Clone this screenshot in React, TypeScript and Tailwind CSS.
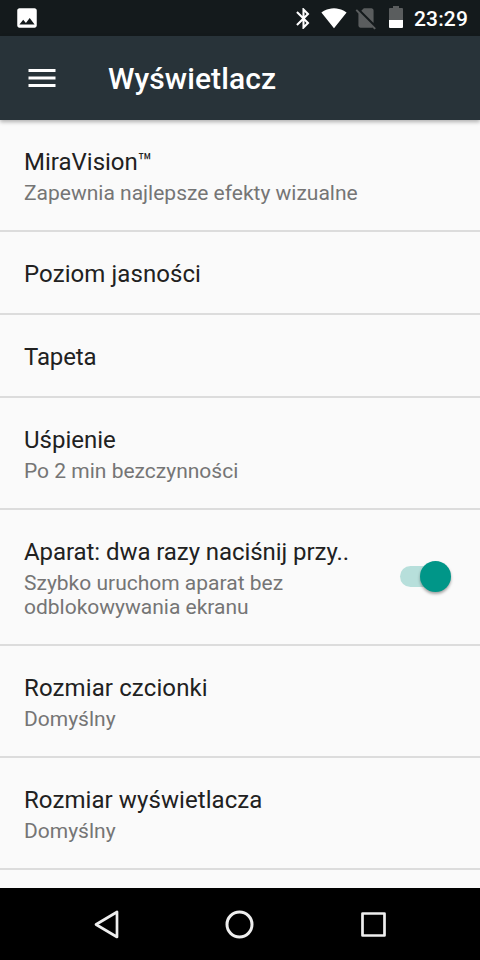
type Setting = {
  title: string;
  summary?: string;
  toggle?: boolean;
  tracking?: string;
};

const settings: Setting[] = [
  { title: "MiraVision™", summary: "Zapewnia najlepsze efekty wizualne" },
  { title: "Poziom jasności", tracking: "tracking-[0.08px]" },
  { title: "Tapeta", tracking: "tracking-[-0.1px]" },
  { title: "Uśpienie", summary: "Po 2 min bezczynności" },
  {
    title: "Aparat: dwa razy naciśnij przy..",
    summary: "Szybko uruchom aparat bez odblokowywania ekranu",
    toggle: true,
    tracking: "tracking-[-0.07px]",
  },
  { title: "Rozmiar czcionki", summary: "Domyślny", tracking: "tracking-[0.12px]" },
  { title: "Rozmiar wyświetlacza", summary: "Domyślny", tracking: "tracking-[0.08px]" },
];

function StatusBar() {
  return (
    <div className="flex h-9 shrink-0 items-center bg-[#141a1c] pl-[14px] pr-3 text-white">
      <svg viewBox="0 0 24 24" className="size-[26px]" fill="currentColor">
        <path d="M21 19V5c0-1.1-.9-2-2-2H5c-1.1 0-2 .9-2 2v14c0 1.1.9 2 2 2h14c1.1 0 2-.9 2-2zM8.5 13.5l2.5 3.01L14.5 12l4.5 6H5l3.5-4.5z" />
      </svg>
      <svg viewBox="0 0 24 24" className="ml-auto size-[25px]" fill="currentColor">
        <path d="M17.71 7.71L12 2h-1v7.59L6.41 5 5 6.41 10.59 12 5 17.59 6.41 19 11 14.41V22h1l5.71-5.71-4.3-4.29 4.3-4.29zM13 5.83l1.88 1.88L13 9.59V5.83zm1.88 10.46L13 18.17v-3.76l1.88 1.88z" />
      </svg>
      <svg viewBox="0 0 24 24" className="mb-px ml-[5px] size-[26px]" fill="currentColor">
        <path d="M12.01 21.49L23.64 7c-.45-.34-4.93-4-11.64-4C5.28 3 .81 6.66.36 7l11.63 14.49.01.01.01-.01z" />
      </svg>
      <svg viewBox="0 0 24 24" className="mb-px ml-[6px] size-[26px]" fill="#5a5d5e">
        <path d="M18.99 5c0-1.1-.89-2-1.99-2h-7L7.66 5.34 19 16.68 18.99 5zM3.65 3.88L2.38 5.15 5 7.77V19c0 1.1.9 2 2 2h10.01c.35 0 .67-.1.96-.26l1.88 1.88 1.27-1.27L3.65 3.88z" />
      </svg>
      <svg viewBox="0 0 14 22" className="mb-[2px] ml-[10px] h-[22px] w-[14px]">
        <path d="M4 0h6v2h3q1 0 1 1v11H0V3q0-1 1-1h3z" fill="#5a5d5e" />
        <path d="M0 14h14v7q0 1-1 1H1q-1 0-1-1z" fill="#fff" />
      </svg>
      <span className="ml-[11px] pt-[2px] text-[21px] font-medium leading-[34px] tracking-[0.15px]">23:29</span>
    </div>
  );
}

function AppBar() {
  return (
    <header className="z-10 flex h-[84px] shrink-0 items-center bg-[#283339] pl-6 text-white shadow-[0_2px_4px_rgba(0,0,0,0.3)]">
      <svg viewBox="0 0 24 24" className="size-9" fill="currentColor">
        <path d="M3 18h18v-2H3v2zm0-5h18v-2H3v2zm0-7v2h18V6H3z" />
      </svg>
      <h1 className="ml-12 pt-[2px] text-[30px] font-medium leading-9 tracking-[0.1px]">Wyświetlacz</h1>
    </header>
  );
}

function Toggle() {
  return (
    <div className="mr-[29px] mb-[2px] flex h-[21px] w-[51px] items-center justify-end rounded-full bg-[linear-gradient(to_right,#b7dfdb_36px,transparent_36px)]">
      <div className="size-[31px] shrink-0 rounded-full bg-[#009688] shadow-[0_2px_3px_rgba(0,0,0,0.35)]" />
    </div>
  );
}

function SettingRow({ title, summary, toggle, tracking = "" }: Setting) {
  return (
    <li className="flex shrink-0 items-center border-b-2 border-[#dcdcdc]">
      <div className="min-w-0 flex-1 pl-6 pt-[28px] pb-[25px]">
        <p className={`whitespace-nowrap text-[24px] leading-7 text-[#212121] ${tracking}`}>{title}</p>
        {summary && (
          <p className="mt-[5px] max-w-[350px] text-[21px] leading-6 text-[#757575]">{summary}</p>
        )}
      </div>
      {toggle && <Toggle />}
    </li>
  );
}

function NavBar() {
  return (
    <nav className="flex h-[72px] shrink-0 items-center justify-between bg-black px-[89px]">
      <svg viewBox="0 0 36 36" className="size-9" fill="none" stroke="#eee" strokeWidth="2.700" strokeLinejoin="round">
        <path d="M28 6v25L7 18.500z" />
      </svg>
      <svg viewBox="0 0 36 36" className="size-9" fill="none" stroke="#eee" strokeWidth="3">
        <circle cx="17.500" cy="18.500" r="12.500" />
      </svg>
      <svg viewBox="0 0 36 36" className="size-9" fill="none" stroke="#eee" strokeWidth="2.700" strokeLinejoin="round">
        <path d="M7.500 7.500h22v22h-22z" />
      </svg>
    </nav>
  );
}

export default function App() {
  return (
    <div className="flex h-[960px] w-[480px] flex-col overflow-hidden bg-[#fafafa] font-['Roboto',sans-serif]">
      <StatusBar />
      <AppBar />
      <ul className="flex min-h-0 flex-1 flex-col overflow-hidden">
        {settings.map((s) => (
          <SettingRow key={s.title} {...s} />
        ))}
      </ul>
      <NavBar />
    </div>
  );
}
